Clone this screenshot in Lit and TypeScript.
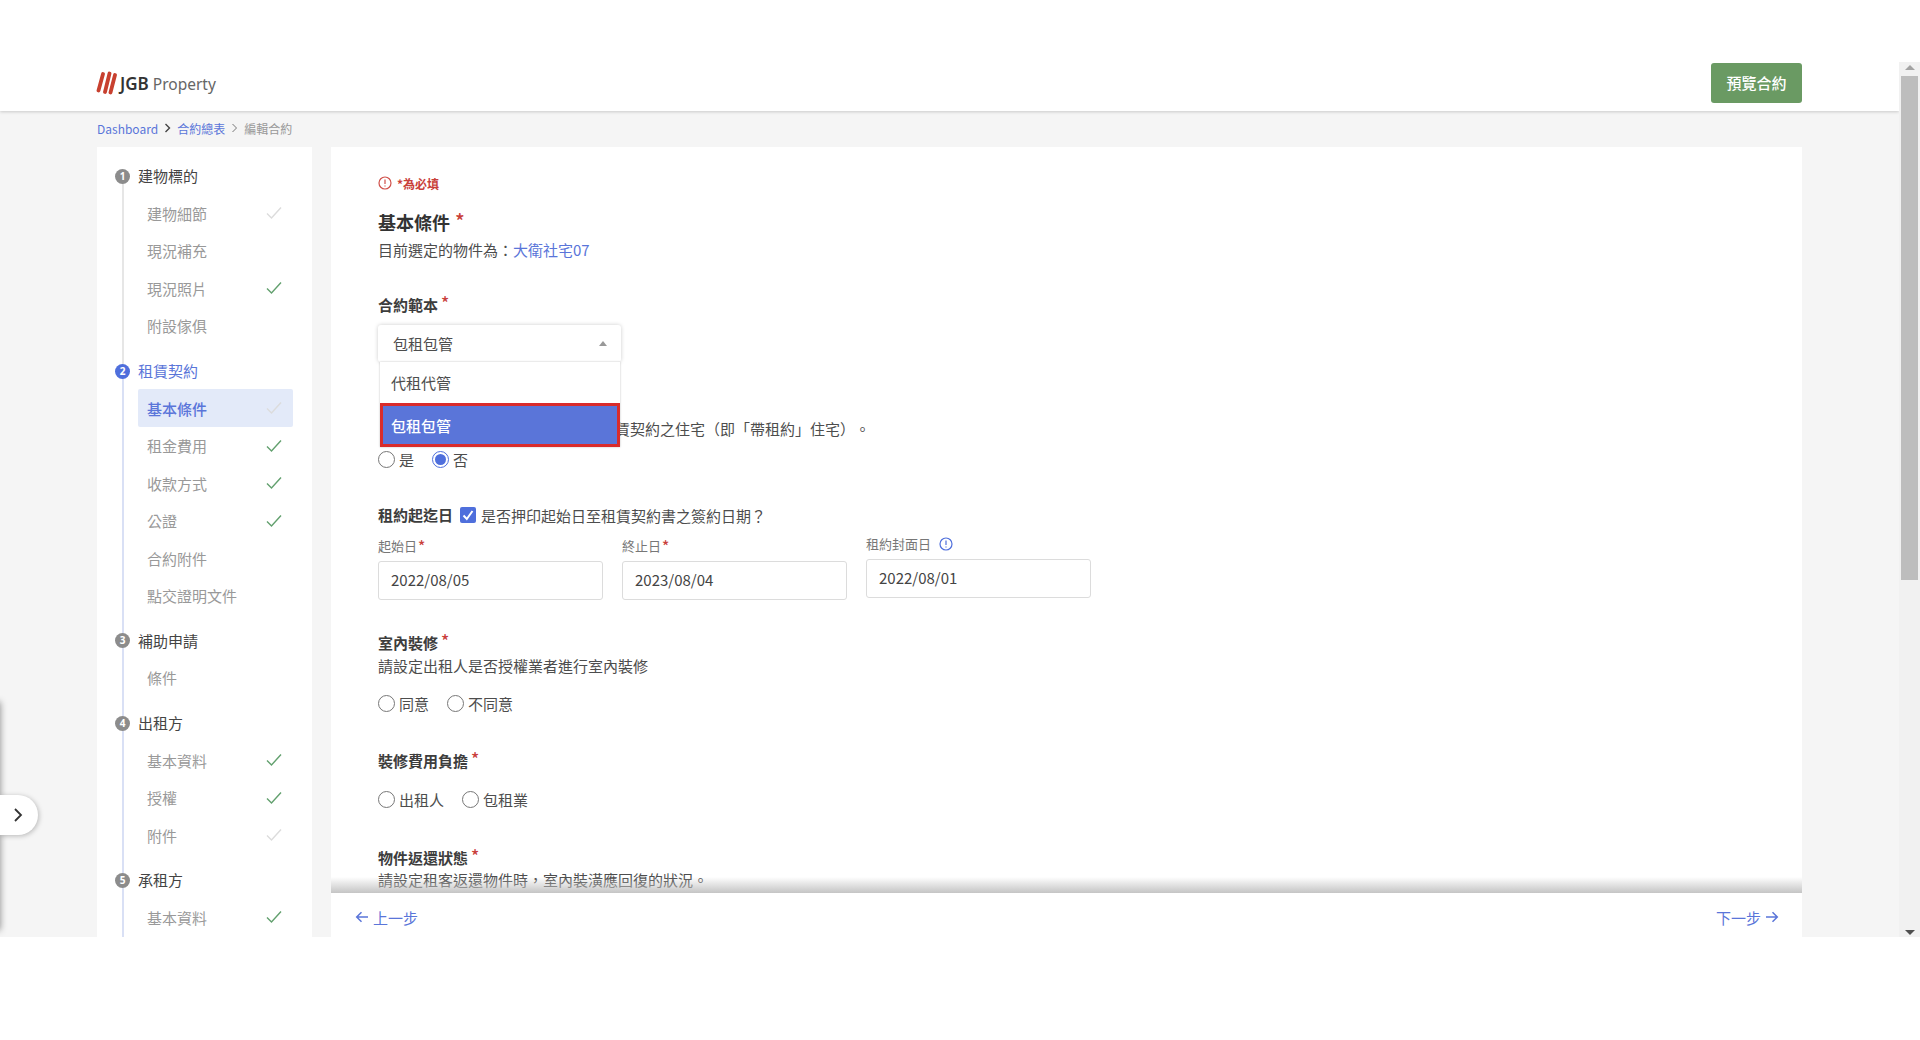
import { LitElement, html, css, svg } from "lit";
import { customElement } from "lit/decorators.js";

type Item = { t: string; c?: "on" | "off"; active?: boolean };
type Group = { n: number; t: string; current?: boolean; items: Item[] };

const groups: Group[] = [
  { n: 1, t: "建物標的", items: [{ t: "建物細節", c: "off" }, { t: "現況補充" }, { t: "現況照片", c: "on" }, { t: "附設傢俱" }] },
  { n: 2, t: "租賃契約", current: true, items: [{ t: "基本條件", c: "off", active: true }, { t: "租金費用", c: "on" }, { t: "收款方式", c: "on" }, { t: "公證", c: "on" }, { t: "合約附件" }, { t: "點交證明文件" }] },
  { n: 3, t: "補助申請", items: [{ t: "條件" }] },
  { n: 4, t: "出租方", items: [{ t: "基本資料", c: "on" }, { t: "授權", c: "on" }, { t: "附件", c: "off" }] },
  { n: 5, t: "承租方", items: [{ t: "基本資料", c: "on" }] },
];

const check = (c: string) => html`<svg class="check ${c}" width="16" height="14" viewBox="0 0 16 14"><path d="M1 7.5 L5.5 12 L15 1.5" fill="none" stroke="currentColor" stroke-width="1.4"/></svg>`;
const info = (cls: string) => html`<svg class=${cls} width="14" height="14" viewBox="0 0 14 14"><circle cx="7" cy="7" r="6" fill="none" stroke="currentColor" stroke-width="1.2"/>${svg`<path d="M7 3.6V8M7 9.6v1" stroke="currentColor" stroke-width="1.2" fill="none"/>`}</svg>`;

@customElement("app-root")
export class AppRoot extends LitElement {
  static styles = css`
    :host { display: block; width: 1920px; height: 1040px; background: #fff; overflow: hidden; text-spacing-trim: space-all;
      font-family: "Noto Sans CJK TC", "Noto Sans", sans-serif; font-size: 15px; color: #4d4d4d; }
    .top { height: 62px; }
    .frame { display: flex; height: 875px; }
    .page { position: relative; flex: 1; background: #f5f5f5; overflow: hidden; display: flex; flex-direction: column; }
    .header { height: 49px; flex: none; background: #fff; box-shadow: 0 1px 3px rgba(0,0,0,.18); display: flex; justify-content: space-between; align-items: flex-start; padding: 0 97px; position: relative; z-index: 2; }
    .logo { display: flex; align-items: center; height: 42px; gap: 3px; margin-left: -1px; font-family: "Noto Sans", sans-serif; font-size: 15.5px; color: #666; }
    .logo b { color: #333; font-weight: 600; font-size: 17px; }
    .preview { width: 91px; height: 40px; margin-top: 1px; padding-bottom: 2px; box-sizing: border-box; background: #6a9a63; color: #fff; border-radius: 3px; font-size: 15px; font-weight: 500; display: flex; align-items: center; justify-content: center; }
    .crumb { height: 36px; flex: none; padding: 0 97px 2px; box-sizing: border-box; display: flex; align-items: center; gap: 6px; font-size: 12px; color: #999; }
    .crumb a { color: #5a75d9; }
    .crumb svg { display: block; }
    .body { flex: 1; min-height: 0; display: flex; gap: 19px; padding: 0 97px; }
    .side { width: 215px; flex: none; background: #fff; overflow: hidden; padding-top: 10px; box-sizing: border-box; }
    .group { position: relative; padding-bottom: 7.25px; }
    .group::before { content: ""; position: absolute; left: 25px; top: 18px; bottom: -18px; width: 1.5px; background: #d9e0f5; }
    .group.first::before { background: #e6e6e6; }
    .gt { position: relative; height: 37.5px; display: flex; align-items: center; gap: 8px; padding-left: 18px; color: #444; }
    .num { width: 15px; height: 15px; margin-top: 1px; border-radius: 50%; background: #8c8c8c; color: #fff; font: 700 10px/15px "Noto Sans", sans-serif; text-align: center; flex: none; }
    .current .gt { color: #5a75d9; }
    .current .num { background: #4f6fdc; }
    .item { position: relative; height: 37.5px; margin-left: 41px; width: 155px; box-sizing: border-box; padding: 0 10px 0 9px; display: flex; align-items: center; justify-content: space-between; color: #999; border-radius: 2px; }
    .item.active { background: #e3eaf9; color: #5a75d9; font-weight: 500; }
    .check { display: block; margin-right: 1px; }
    .check.on { color: #62a06e; }
    .check.off { color: #dcdcdc; }
    .main { flex: 1; min-width: 0; background: #fff; display: flex; flex-direction: column; }
    .scroll { flex: 1; min-height: 0; overflow: hidden; padding: 26px 0 0 47px; position: relative; }
    .note { display: flex; align-items: center; gap: 5px; height: 20px; font-size: 12px; font-weight: 700; color: #c9403a; }
    .note svg { color: #d0504a; margin-top: -1px; }
    h2 { margin: 16px 0 0; font-size: 18px; line-height: 26px; font-weight: 700; color: #333; }
    h2 .star { font-size: 20px; top: -1px; margin-left: 5px; }
    .line { line-height: 20px; height: 20px; white-space: nowrap; }
    .sub3 { margin-top: 3px; }
    .sub5 { margin-top: 5px; }
    .link { color: #5a75d9; }
    .label { line-height: 20px; height: 20px; font-weight: 700; color: #3d3d3d; }
    .star { color: #c9403a; font-weight: 500; font-size: 17px; line-height: 0; position: relative; top: -1px; margin-left: 3px; }
    .sm .star { font-size: 15px; top: 0; margin-left: 1px; }
    .m35 { margin-top: 35px; } .m38 { margin-top: 38px; } .m39 { margin-top: 39px; } .m33 { margin-top: 33px; }
    .selectwrap { position: relative; width: 243px; margin-top: 10px; }
    .select { height: 37px; box-sizing: border-box; border-radius: 3px; box-shadow: 0 0 4px rgba(0,0,0,.2); padding: 0 15px; display: flex; align-items: center; justify-content: space-between; background: #fff; }
    .tri { width: 0; height: 0; border: 4.5px solid transparent; border-top: 0; border-bottom: 5px solid #999; margin-right: -1px; }
    .menu { position: absolute; z-index: 3; left: 2px; top: 37px; width: 240px; background: #fff; box-shadow: 0 0 2px rgba(0,0,0,.25); }
    .opt { height: 41px; box-sizing: border-box; padding-left: 11px; display: flex; align-items: center; }
    .opt.sel { height: 44px; background: #5a75d9; color: #fff; border: 3px solid #d92b2b; padding-left: 8px; font-weight: 500; }
    .hiddenstart { margin-top: 57px; padding-left: 237px; }
    .radios { display: flex; align-items: center; height: 20px; margin-top: 10px; }
    .r { display: flex; align-items: center; gap: 4px; margin-right: 18px; }
    .dot { width: 17px; height: 17px; box-sizing: border-box; border: 1.2px solid #777; border-radius: 50%; background: #fff; flex: none; display: flex; align-items: center; justify-content: center; }
    .dot.on { border-color: #4f6fdc; }
    .dot.on::after { content: ""; width: 11px; height: 11px; border-radius: 50%; background: #4f6fdc; }
    .m17 { margin-top: 17px; } .m18 { margin-top: 18px; }
    .dateline { display: flex; align-items: center; height: 20px; margin-top: 36px; }
    .box { width: 16px; height: 16px; background: #4f6fdc; border-radius: 2px; margin: 0 5px 0 7px; display: block; }
    .dates { display: grid; grid-template-columns: repeat(3, 225px); gap: 19px; margin-top: 13px; }
    .sm { font-size: 13px; line-height: 16px; height: 16px; color: #777; display: flex; align-items: center; }
    .sm svg { color: #4f6fdc; margin-left: 8px; }
    .input { margin-top: 7px; height: 39px; box-sizing: border-box; border: 1px solid #dcdcdc; border-radius: 3px; padding: 0 0 2px 12px; display: flex; align-items: center; color: #444; font-size: 15px; }
    .shift { margin-top: -2px; }
    .foot { height: 44px; flex: none; background: #fff; display: flex; justify-content: space-between; align-items: center; padding: 4px 23px 0 24px; box-sizing: border-box; color: #5a75d9; font-size: 15px; position: relative; }
    .foot::before { content: ""; position: absolute; left: 0; right: 0; top: -16px; height: 16px; background: linear-gradient(rgba(190,190,190,0), rgba(190,190,190,.9)); }
    .foot span { display: flex; align-items: center; gap: 4px; }
    .bar { width: 21px; flex: none; background: #f1f1f1; display: flex; flex-direction: column; align-items: center; }
    .up { width: 0; height: 0; border: 5px solid transparent; border-top: 0; border-bottom: 5px solid #a3a3a3; margin-top: 3px; }
    .thumb { width: 17px; height: 504px; background: #bdbdbd; margin-top: 6px; }
    .down { width: 0; height: 0; border: 5px solid transparent; border-bottom: 0; border-top: 5px solid #505050; margin-top: auto; margin-bottom: 2px; }
    .edge { position: absolute; left: -10px; width: 10px; top: 640px; height: 228px; background: #fff; box-shadow: 0 0 7px rgba(0,0,0,.45); }
    .handle { position: absolute; left: 0; top: 733px; width: 38px; height: 40px; background: #fff; border-radius: 0 20px 20px 0; box-shadow: 1px 1px 5px rgba(0,0,0,.25); display: flex; align-items: center; justify-content: flex-end; padding-right: 15px; box-sizing: border-box; z-index: 4; }
  `;

  private radio(label: string, on = false) {
    return html`<span class="r"><i class="dot ${on ? "on" : ""}"></i>${label}</span>`;
  }

  private renderGroup(g: Group, i: number) {
    return html`<div class="group ${g.current ? "current" : ""} ${i === 0 ? "first" : ""}">
      <div class="gt"><span class="num">${g.n}</span>${g.t}</div>
      ${g.items.map((it) => html`<div class="item ${it.active ? "active" : ""}"><span>${it.t}</span>${it.c ? check(it.c) : ""}</div>`)}
    </div>`;
  }

  render() {
    return html`
      <div class="top"></div>
      <div class="frame">
        <div class="page">
          <div class="header">
            <div class="logo">
              <svg width="21" height="24" viewBox="0 0 21 24"><path d="M2.5 19.5 L7 3 M9 21 L13.5 2.5 M14.5 21.5 L19 4" stroke="#c8402f" stroke-width="3.8" stroke-linecap="round" fill="none"/></svg>
              <span><b>JGB</b> Property</span>
            </div>
            <div class="preview">預覽合約</div>
          </div>
          <div class="crumb">
            <a>Dashboard</a>
            <svg width="7" height="10" viewBox="0 0 7 10"><path d="M1.5 1 L5.5 5 L1.5 9" fill="none" stroke="#444" stroke-width="1.4"/></svg>
            <a>合約總表</a>
            <svg width="7" height="10" viewBox="0 0 7 10"><path d="M1.5 1 L5.5 5 L1.5 9" fill="none" stroke="#777" stroke-width="1"/></svg>
            <span>編輯合約</span>
          </div>
          <div class="body">
            <div class="side">${groups.map((g, i) => this.renderGroup(g, i))}</div>
            <div class="main">
              <div class="scroll">
                <div class="note">${info("")}<span>*為必填</span></div>
                <h2>基本條件<span class="star">*</span></h2>
                <div class="line sub5">目前選定的物件為：<span class="link">大衛社宅07</span></div>
                <div class="label m35">合約範本<span class="star">*</span></div>
                <div class="selectwrap">
                  <div class="select"><span>包租包管</span><i class="tri"></i></div>
                  <div class="menu">
                    <div class="opt">代租代管</div>
                    <div class="opt sel">包租包管</div>
                  </div>
                </div>
                <div class="line hiddenstart">賃契約之住宅（即「帶租約」住宅）。</div>
                <div class="radios">${this.radio("是")}${this.radio("否", true)}</div>
                <div class="dateline">
                  <span class="label">租約起迄日</span>
                  <svg class="box" viewBox="0 0 16 16"><path d="M3.5 8.5 L6.8 12 L12.5 4" fill="none" stroke="#fff" stroke-width="2"/></svg>
                  <span>是否押印起始日至租賃契約書之簽約日期？</span>
                </div>
                <div class="dates">
                  <div><div class="sm">起始日<span class="star">*</span></div><div class="input">2022/08/05</div></div>
                  <div><div class="sm">終止日<span class="star">*</span></div><div class="input">2023/08/04</div></div>
                  <div class="shift"><div class="sm">租約封面日${info("")}</div><div class="input">2022/08/01</div></div>
                </div>
                <div class="label m33">室內裝修<span class="star">*</span></div>
                <div class="line sub3">請設定出租人是否授權業者進行室內裝修</div>
                <div class="radios m17">${this.radio("同意")}${this.radio("不同意")}</div>
                <div class="label m38">裝修費用負擔<span class="star">*</span></div>
                <div class="radios m18">${this.radio("出租人")}${this.radio("包租業")}</div>
                <div class="label m39">物件返還狀態<span class="star">*</span></div>
                <div class="line" style="margin-top:2px">請設定租客返還物件時，室內裝潢應回復的狀況。</div>
              </div>
              <div class="foot">
                <span><svg width="14" height="12" viewBox="0 0 14 12"><path d="M13 6 H2 M6.5 1.2 L1.7 6 L6.5 10.8" fill="none" stroke="currentColor" stroke-width="1.5"/></svg>上一步</span>
                <span>下一步<svg width="14" height="12" viewBox="0 0 14 12"><path d="M1 6 H12 M7.5 1.2 L12.3 6 L7.5 10.8" fill="none" stroke="currentColor" stroke-width="1.5"/></svg></span>
              </div>
            </div>
          </div>
          <div class="edge"></div>
          <div class="handle"><svg width="10" height="16" viewBox="0 0 10 16"><path d="M2 2 L8 8 L2 14" fill="none" stroke="#333" stroke-width="1.8"/></svg></div>
        </div>
        <div class="bar"><i class="up"></i><i class="thumb"></i><i class="down"></i></div>
      </div>
    `;
  }
}
